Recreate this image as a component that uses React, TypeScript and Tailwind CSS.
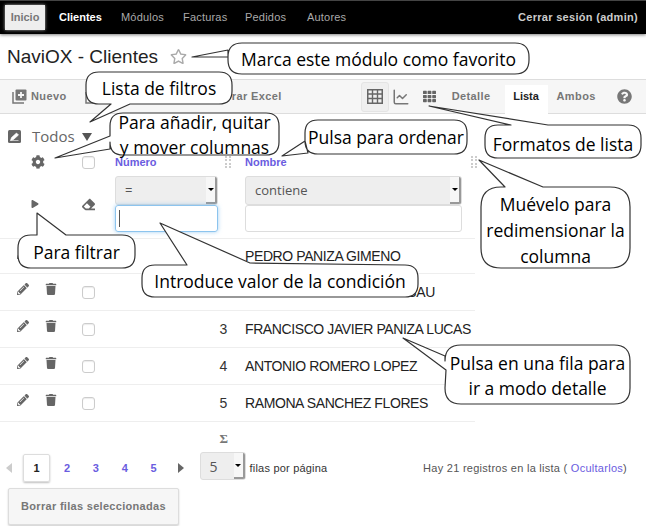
import type { ReactNode } from "react";
import { FaCog, FaEraser, FaPencilAlt, FaPlay, FaQuestionCircle, FaRegStar, FaTh, FaTrash } from "react-icons/fa";
import { LuChartLine } from "react-icons/lu";

const rows = [
  { n: 1, name: "PEDRO PANIZA GIMENO" },
  { n: 2, name: "M. CARMEN GIMENEZ BABAU" },
  { n: 3, name: "FRANCISCO JAVIER PANIZA LUCAS" },
  { n: 4, name: "ANTONIO ROMERO LOPEZ" },
  { n: 5, name: "RAMONA SANCHEZ FLORES" },
];

const navItems = ["Módulos", "Facturas", "Pedidos", "Autores"];

type Side = "top" | "bottom" | "left";
type Pt = [number, number];

// rounded box with a tail cut into one side: a and b are where the tail leaves the box
function bubble(x0: number, y0: number, x1: number, y1: number, r: number, side: Side, a: Pt, tip: Pt, b: Pt) {
  const tail = (first: Pt, last: Pt) => `L${first[0]} ${first[1]} L${tip[0]} ${tip[1]} L${last[0]} ${last[1]} `;
  let d = `M${x0 + r} ${y0} `;
  if (side === "top") d += tail(a, b);
  d += `L${x1 - r} ${y0} Q${x1} ${y0} ${x1} ${y0 + r} L${x1} ${y1 - r} Q${x1} ${y1} ${x1 - r} ${y1} `;
  if (side === "bottom") d += tail(b, a);
  d += `L${x0 + r} ${y1} Q${x0} ${y1} ${x0} ${y1 - r} `;
  if (side === "left") d += tail(b, a);
  d += `L${x0} ${y0 + r} Q${x0} ${y0} ${x0 + r} ${y0} Z`;
  return d;
}

const bubbles = [
  bubble(228, 43, 529, 74, 14, "left", [228, 50], [192, 57], [228, 57]),
  bubble(86, 72, 232, 104, 13, "bottom", [111, 104], [90, 122], [130, 104]),
  bubble(110, 113, 279, 155, 13, "left", [110, 136], [55, 158], [110, 149]),
  bubble(305, 120, 467, 154, 13, "left", [305, 141], [282, 156], [308, 153]),
  bubble(485, 125, 641, 158, 13, "top", [511, 125], [429, 106], [548, 125]),
  bubble(481, 187, 630, 268, 20, "top", [505, 187], [479, 160], [543, 187]),
  bubble(18, 235, 135, 268, 13, "top", [37, 235], [37, 213], [66, 235]),
  bubble(142, 265, 418, 297, 13, "top", [187, 265], [160, 223], [250, 263]),
  bubble(445, 345, 630, 404, 16, "left", [445, 356], [403, 338], [446, 370]),
];

function Label({ className, children }: { className: string; children: ReactNode }) {
  return (
    <div
      className={`absolute text-center font-['Open_Sans',sans-serif] text-[17.5px] leading-[25px] whitespace-nowrap text-black ${className}`}
    >
      {children}
    </div>
  );
}

function Checkbox() {
  return <span className="block h-[13px] w-[13px] shrink-0 rounded-[3px] border border-[#ccc] bg-white shadow-[inset_0_1px_1px_rgba(0,0,0,0.08)]" />;
}

function Grip() {
  return (
    <span className="grid h-[12px] w-[6px] grid-cols-2 gap-px">
      {[0, 1, 2, 3, 4, 5, 6, 7].map((i) => (
        <span key={i} className="h-[2px] w-[2px] bg-[#ccc]" />
      ))}
    </span>
  );
}

function SelectBox({ label, className }: { label: string; className: string }) {
  return (
    <div className={`flex items-stretch rounded-[3px] border border-[#ddd] bg-[#eee] ${className}`}>
      <span className="flex-1 self-center pl-[9px] font-['Open_Sans',sans-serif] text-[13px] text-[#555]">{label}</span>
      <span className="flex w-[11px] items-center justify-center rounded-r-[2px] border-r-2 border-b-2 border-[#999] bg-[#f7f7f7]">
        <span className="h-0 w-0 border-x-[3px] border-t-[3px] border-x-transparent border-t-black" />
      </span>
    </div>
  );
}

function ToolbarText({ children, className = "" }: { children: ReactNode; className?: string }) {
  return <span className={`text-[11px] font-bold tracking-[0.4px] text-[#777] ${className}`}>{children}</span>;
}

function NewIcon({ className }: { className: string }) {
  return (
    <svg className={className} width="15" height="15" viewBox="0 0 15 15">
      <path d="M1 3v11h11" fill="none" stroke="#777" strokeWidth="1.5" />
      <rect x="3.5" y="0.5" width="11" height="11" rx="1" fill="#777" />
      <path d="M9 3v6M6 6h6" stroke="#f6f6f6" strokeWidth="1.8" />
    </svg>
  );
}

function TableIcon() {
  return (
    <svg width="16" height="15" viewBox="0 0 16 15">
      <rect x="0.75" y="0.75" width="14.5" height="13.5" fill="none" stroke="#666" strokeWidth="1.5" />
      <path d="M0 5h16M0 9.5h16M5.5 0v15M10.5 0v15" stroke="#666" strokeWidth="1.4" />
    </svg>
  );
}

function FilterIcon() {
  return (
    <svg width="13" height="13" viewBox="0 0 13 13">
      <rect width="13" height="13" rx="1.5" fill="#666" />
      <path d="M2.5 10.5l1-3 5-4.5 2 2-5 4.5z M2.5 10.5h8" fill="#fff" stroke="#fff" strokeWidth="0.6" />
    </svg>
  );
}

export default function App() {
  return (
    <div className="relative h-[526px] w-[646px] overflow-hidden bg-white font-['Liberation_Sans',Arial,sans-serif]">
      <nav className="flex h-[34px] items-center border-t border-[#444] bg-black pr-[8px] pl-[5px] text-[11px] shadow-[0_1px_3px_rgba(0,0,0,0.5)]">
        <span className="flex h-[25px] w-[40px] items-center justify-center bg-[#eee] font-bold text-[#777] shadow-[0_0_3px_rgba(255,255,255,0.7)]">
          Inicio
        </span>
        <span className="ml-[14px] w-[62px] font-bold text-white">Clientes</span>
        {navItems.map((item) => (
          <span key={item} className="w-[62px] tracking-[0.2px] text-[#aaa]">
            {item}
          </span>
        ))}
        <span className="ml-auto font-bold tracking-[0.3px] text-[#ccc]">Cerrar sesión (admin)</span>
      </nav>

      <div className="flex h-[45px] items-center pl-[7px]">
        <h1 className="text-[19px] leading-none text-[#222]">NaviOX - Clientes</h1>
        <FaRegStar className="ml-[12px] text-[17px] text-[#aaa]" />
      </div>

      <div className="relative flex h-[35px] items-center border-y border-[#ddd] bg-[#f6f6f6] pl-[12px]">
        <NewIcon className="shrink-0" />
        <ToolbarText className="ml-[4px]">Nuevo</ToolbarText>
        <NewIcon className="ml-[18px] shrink-0" />
        <ToolbarText className="ml-[103px] w-[90px]">Generar Excel</ToolbarText>
        <span className="ml-[68px] flex h-[30px] w-[28px] items-center justify-center rounded-[3px] border border-[#e4e4e4] bg-[#efefef]">
          <TableIcon />
        </span>
        <LuChartLine className="ml-[3px] text-[18px] text-[#777]" />
        <FaTh className="ml-[13px] text-[13px] text-[#666]" />
        <ToolbarText className="ml-[16px]">Detalle</ToolbarText>
        <span className="ml-[14px] flex h-[36px] w-[43px] translate-y-[6px] items-center justify-center bg-white pb-[12px] text-[11px] font-bold text-[#222]">
          Lista
        </span>
        <ToolbarText className="ml-[9px]">Ambos</ToolbarText>
        <FaQuestionCircle className="ml-[21px] text-[15px] text-[#777]" />
      </div>

      <div className="flex h-[37px] items-center pt-[8px] pl-[8px]">
        <FilterIcon />
        <span className="ml-[11px] font-['Open_Sans',sans-serif] text-[15px] text-[#666]">Todos</span>
        <span className="ml-[7px] h-0 w-0 border-x-[5px] border-t-[8px] border-x-transparent border-t-[#555]" />
      </div>

      <div className="flex h-[22px] w-[477px] items-center">
        <span className="flex w-[82px] justify-center pr-[7px]">
          <FaCog className="text-[14px] text-[#666]" />
        </span>
        <Checkbox />
        <span className="ml-[20px] w-[110px] text-[11px] font-bold text-[#6a5ce0]">Número</span>
        <Grip />
        <span className="ml-[14px] w-[226px] text-[11px] font-bold text-[#6a5ce0]">Nombre</span>
        <Grip />
      </div>

      <div className="flex h-[66px] w-[475px] border-b border-[#eee] pt-[3px]">
        <div className="flex h-[57px] w-[82px] items-end justify-center pr-[12px] pb-[25px]">
          <FaPlay className="text-[8px] text-[#666]" />
        </div>
        <div className="flex h-[57px] w-[13px] items-end justify-center pb-[22px]">
          <FaEraser className="text-[13px] text-[#666]" />
        </div>
        <div className="ml-[20px] flex w-[103px] flex-col">
          <SelectBox label="=" className="h-[29px] shrink-0" />
          <div className="flex h-[27px] shrink-0 items-center rounded-[3px] border border-[#8cc4ee] pl-[3px] shadow-[0_0_4px_rgba(102,175,233,0.6)]">
            <span className="h-[17px] w-px bg-[#555]" />
          </div>
        </div>
        <div className="ml-[27px] flex w-[217px] flex-col">
          <SelectBox label="contiene" className="h-[29px] shrink-0" />
          <div className="h-[27px] shrink-0 rounded-[3px] border border-[#ddd]" />
        </div>
      </div>

      <div className="w-[475px]">
        {rows.map((row) => (
          <div key={row.n} className="flex h-[37px] items-center border-b border-[#eee] first:h-[35px]">
            <span className="flex w-[82px] shrink-0 -translate-y-[3px] items-center pl-[17px]">
              <FaPencilAlt className="text-[12px] text-[#666]" />
              <FaTrash className="ml-[16px] text-[12px] text-[#666]" />
            </span>
            <Checkbox />
            <span className="w-[132px] shrink-0 text-right text-[14px] tracking-[-0.4px] text-[#333]">{row.n}</span>
            <span className="ml-[18px] shrink-0 text-[14px] tracking-[-0.4px] whitespace-nowrap text-[#222]">{row.name}</span>
          </div>
        ))}
      </div>

      <div className="flex h-[30px] w-[228px] items-center justify-end pt-[3px] font-['Liberation_Serif',serif] text-[13px] font-bold text-[#777]">
        Σ
      </div>

      <div className="flex h-[32px] items-center pr-[19px] pl-[6px] text-[11px]">
        <span className="h-0 w-0 border-y-[5px] border-r-[6px] border-y-transparent border-r-[#ccc]" />
        <span className="ml-[11px] flex h-[28px] w-[27px] items-center justify-center rounded-[2px] border border-[#ddd] font-bold text-[#222] shadow-[0_1px_2px_rgba(0,0,0,0.25)]">
          1
        </span>
        <span className="ml-[14px] flex gap-[22.7px] font-bold text-[#6a5ce0]">
          <span>2</span>
          <span>3</span>
          <span>4</span>
          <span>5</span>
        </span>
        <span className="ml-[21px] h-0 w-0 border-y-[5px] border-l-[6px] border-y-transparent border-l-[#666]" />
        <SelectBox label="5" className="ml-[16px] h-[28px] w-[46px] -translate-y-[2px] [&>span:first-child]:text-[14px]" />
        <span className="ml-[4px] tracking-[0.2px] text-[#333]">filas por página</span>
        <span className="ml-auto tracking-[0.27px] text-[#555]">
          Hay 21 registros en la lista ( <span className="text-[#6a5ce0]">Ocultarlos</span>)
        </span>
      </div>

      <button className="mt-[4px] ml-[8px] flex h-[37px] w-[171px] items-center justify-center rounded-[2px] border border-[#ddd] bg-[#f6f6f6] text-[11px] font-bold tracking-[0.3px] text-[#777] shadow-[0_1px_2px_rgba(0,0,0,0.2)]">
        Borrar filas seleccionadas
      </button>

      {/* callouts drawn over the page */}
      <svg className="absolute inset-0 h-full w-full" viewBox="0 0 646 526">
        {bubbles.map((d, i) => (
          <path key={i} d={d} fill="#fff" stroke="#333" strokeWidth="1.2" strokeLinejoin="round" />
        ))}
      </svg>
      <Label className="top-[47px] left-[228px] w-[301px]">Marca este módulo como favorito</Label>
      <Label className="top-[76px] left-[86px] w-[146px]">Lista de filtros</Label>
      <Label className="top-[110px] left-[110px] w-[169px] leading-[24px]">
        Para añadir, quitar
        <br />y mover columnas
      </Label>
      <Label className="top-[125px] left-[305px] w-[162px]">Pulsa para ordenar</Label>
      <Label className="top-[132px] left-[485px] w-[156px]">Formatos de lista</Label>
      <Label className="top-[191px] left-[481px] w-[149px] leading-[26px]">
        Muévelo para
        <br />
        redimensionar la
        <br />
        columna
      </Label>
      <Label className="top-[240px] left-[18px] w-[117px]">Para filtrar</Label>
      <Label className="top-[269px] left-[142px] w-[276px]">Introduce valor de la condición</Label>
      <Label className="top-[351px] left-[445px] w-[185px]">
        Pulsa en una fila para
        <br />
        ir a modo detalle
      </Label>
    </div>
  );
}
